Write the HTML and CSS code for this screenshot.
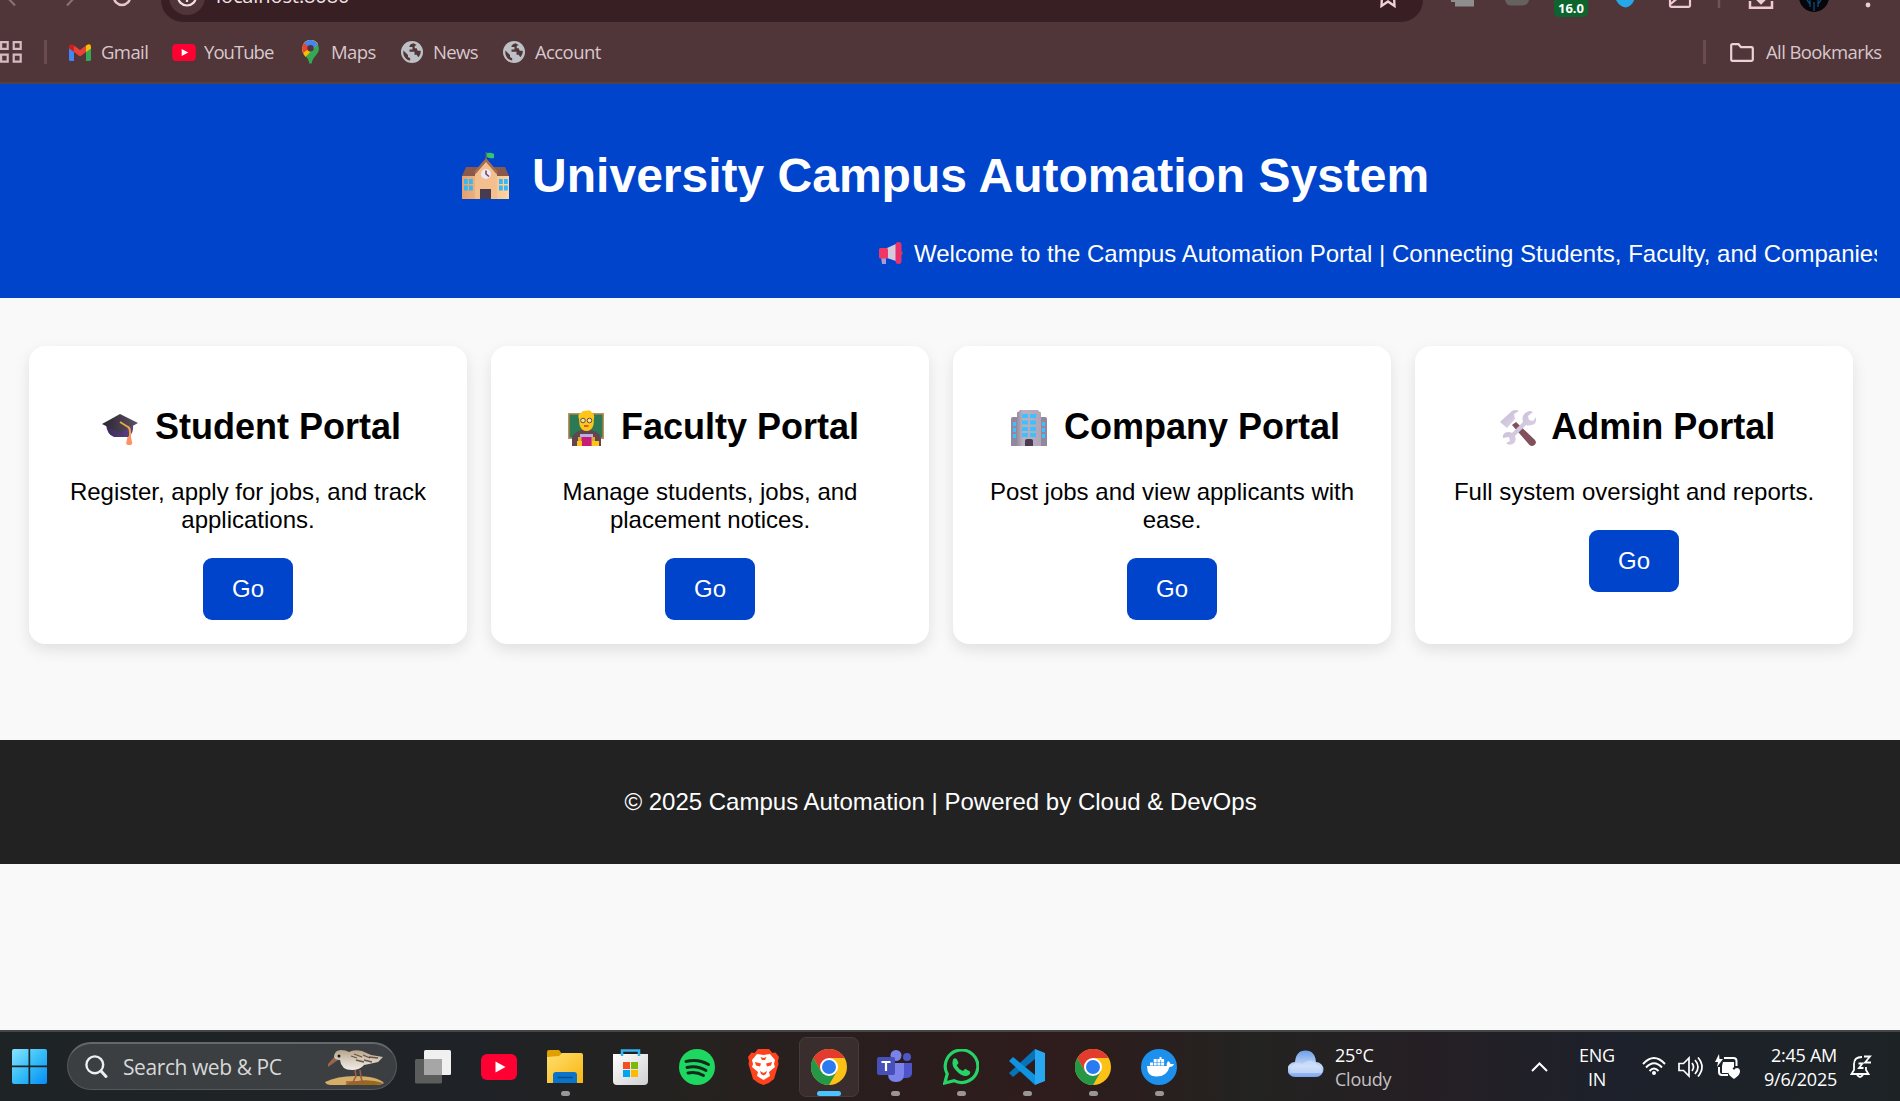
FILE: index.html
```
<!DOCTYPE html>
<html lang="en">
<head>
<meta charset="utf-8">
<title>University Campus Automation System</title>
<link rel="stylesheet" href="styles.css">
</head>
<body>
<svg class="defs" aria-hidden="true">
  <defs>
    <linearGradient id="wall" x1="0" x2="1"><stop offset="0" stop-color="#e5a070"/><stop offset="1" stop-color="#ffd6a3"/></linearGradient>
    <linearGradient id="win" x1="0" y1="0" x2="1" y2="1"><stop offset="0" stop-color="#8be3ff"/><stop offset=".5" stop-color="#35bdf7"/><stop offset="1" stop-color="#078df5"/></linearGradient>
    <linearGradient id="cap" x1="0" x2="1"><stop offset="0" stop-color="#2c2532"/><stop offset="1" stop-color="#5b5065"/></linearGradient>
    <linearGradient id="capbase" x1="0" x2="1"><stop offset="0" stop-color="#3a2a5a"/><stop offset="1" stop-color="#62408a"/></linearGradient>
    <linearGradient id="fold" x1="0" y1="0" x2="1" y2="1"><stop offset="0" stop-color="#ffdf70"/><stop offset="1" stop-color="#f9b50f"/></linearGradient>
    <linearGradient id="bag" x1="0" y1="0" x2="1" y2="1"><stop offset="0" stop-color="#fff"/><stop offset="1" stop-color="#cfd0d2"/></linearGradient>
    <linearGradient id="cloud" x1="0" y1="0" x2="0" y2="1"><stop offset="0" stop-color="#6f9fe8"/><stop offset=".6" stop-color="#c5d9f8"/><stop offset="1" stop-color="#7ea5ee"/></linearGradient>
    <linearGradient id="steel" x1="0" y1="0" x2="1" y2="1"><stop offset="0" stop-color="#c2b9cc"/><stop offset="1" stop-color="#e3d7f0"/></linearGradient>
    <linearGradient id="tower" x1="0" x2="1"><stop offset="0" stop-color="#978ea2"/><stop offset=".25" stop-color="#bab1c0"/><stop offset="1" stop-color="#b1a6b9"/></linearGradient>
    <linearGradient id="bird" x1="0" y1="0" x2="0" y2="1"><stop offset="0" stop-color="#b8a388"/><stop offset=".55" stop-color="#d9cfc2"/><stop offset="1" stop-color="#f1ece8"/></linearGradient>
    <symbol id="chrome" viewBox="0 0 36 36">
      <circle cx="18" cy="18" r="18" fill="#fbc116"/>
      <path d="M2.4 9A18 18 0 0 1 33.6 9H18L10.2 22.5Z" fill="#e33b2e"/>
      <path d="M2.4 9A18 18 0 0 0 18 36L25.8 22.5H10.2Z" fill="#249846"/>
      <circle cx="18" cy="18" r="9" fill="#fff"/><circle cx="18" cy="18" r="7" fill="#2b7bf0"/>
    </symbol>
    <symbol id="globe" viewBox="0 0 22 22">
      <circle cx="11" cy="11" r="11" fill="#bdc1c6"/>
      <path d="M12.500 2.200c-2 .3-4.500 2-4 3.800h3v2.500H8.500v2.300h5v3h2.200l1.500 2.500c2-2 2.800-4.500 2.500-6.500h-3l-1-2.500h-2V5l2-1ZM2.400 9.500 7 14v2l2.200 1.200v2.400C4.500 18.800 1.500 14.500 2.400 9.500Z" fill="#503539"/>
    </symbol>
    <symbol id="play" viewBox="0 0 36 26">
      <rect width="36" height="26" rx="6" fill="#ff0033"/><path d="M14.500 7.500v11l10-5.500Z" fill="#fff"/>
    </symbol>
  </defs>
</svg>

<div class="browser">
  <div class="toolbar">
    <svg class="nav" width="161" height="22" viewBox="0 0 161 22" fill="none" stroke-width="2.200">
      <path d="M7-3 15 5.500M75-3 67 5.500" stroke="#8a6f73"/><path d="M114-3A8 8 0 0 0 130-3" stroke="#e8c4cb" stroke-width="2.600"/>
    </svg>
    <div class="omnibox">
      <svg class="site" width="36" height="22" viewBox="0 0 36 22"><circle cx="18" cy="-3" r="18" fill="#503539"/><circle cx="18" cy="-3.500" r="9" fill="none" stroke="#f1dfe2" stroke-width="2.200"/><path d="M18-5v7" stroke="#f1dfe2" stroke-width="2.200"/></svg>
      <span class="url">localhost:8080</span>
      <svg class="star" width="20" height="22" viewBox="0 0 20 22"><path d="M4-4 3.500 6 10 1.500 16.500 6 16-4" fill="none" stroke="#f0d3d9" stroke-width="2.300"/></svg>
    </div>
    <svg class="ext" width="120" height="22" viewBox="0 0 120 22"><path d="M28 0h23v6.500H32V2h-4Z" fill="#8e8e8e"/><path d="M82 0h24q-1 5-6 5.500H88q-5 0-6-5.500Z" fill="#65615f"/></svg>
    <span class="badge">16.0</span>
    <svg class="ext" width="312" height="22" viewBox="0 0 312 22" fill="none">
      <path d="M27-2q4 9 10.500 9.500Q44 7 47-2Z" fill="#25a7e8"/>
      <path d="M82-3V5.500q0 1.300 1.300 1.300h17.400q1.300 0 1.300-1.300V-3M82.500 4l6-5" stroke="#f0cad2" stroke-width="2.200"/>
      <path d="M131 0v8" stroke="#735357" stroke-width="2.500"/>
      <path d="M162 1v6.800h22V1M173-4v6M169-1l4 4 4-4" stroke="#f0cad2" stroke-width="2.500"/>
      <circle cx="226" cy="-3" r="15" fill="#050609"/><path d="M222-1v8m8-8v8m-4-5v9M219 0l3 4m11-4-3 4" stroke="#124a78" stroke-width="1.300"/>
      <circle cx="280" cy="5" r="2.400" fill="#f0cad2"/>
    </svg>
  </div>
  <div class="bookmarks">
    <svg class="apps" width="22" height="22" viewBox="0 0 22 22" fill="none" stroke="#d4bcc0" stroke-width="2.200"><path d="M1.100 1.100h6.600v6.800H1.100ZM13.700 1.100h7v6.800h-7ZM1.100 13.700h6.600v7H1.100ZM13.700 13.700h7v7h-7Z"/></svg>
    <i class="rule"></i>
    <a class="bm gmail"><svg width="22" height="17" viewBox="0 0 22 17"><path d="M0 3h5v14H1.500Q0 17 0 15.500Z" fill="#4285f4"/><path d="M17 3h5v12.500q0 1.500-1.500 1.500H17Z" fill="#34a853"/><path d="M17 8V1.500Q22-1.500 22 3v1.500Z" fill="#fbbc04"/><path d="M0 4.500V3Q0-1.500 5 1.500V8Z" fill="#c5221f"/><path d="M5 1.500 11 6l6-4.500V8l-6 4.500L5 8Z" fill="#ea4335"/></svg><span>Gmail</span></a>
    <a class="bm youtube"><svg width="24" height="17"><use href="#play"/></svg><span>YouTube</span></a>
    <a class="bm maps"><svg width="17" height="24" viewBox="0 0 17 24"><path d="M8.500 0A8.500 8.500 0 0 1 17 8.500c0 6-6.500 8-7.300 15h-2.400C6.500 16.500 0 14.500 0 8.500A8.500 8.500 0 0 1 8.500 0Z" fill="#34a853"/><path d="M2 3A8.500 8.500 0 0 1 16 4L3.500 17Q0 12.500 0 8.500Z" fill="#fbbc04"/><path d="M2 3A8.500 8.500 0 0 1 15.800 4.200L8 12Z" fill="#4285f4"/><path d="M2 3 8 8 1 13Q-1 7 2 3Z" fill="#ea4335"/><circle cx="8.500" cy="8.300" r="3.200" fill="#503539"/></svg><span>Maps</span></a>
    <a class="bm news"><svg width="22" height="22"><use href="#globe"/></svg><span>News</span></a>
    <a class="bm account"><svg width="22" height="22"><use href="#globe"/></svg><span>Account</span></a>
    <i class="rule end"></i>
    <a class="bm all"><svg width="24" height="19" viewBox="0 0 24 19"><path d="M2.500 1.200h6l2.500 3h10.500q1.300 0 1.300 1.300v11q0 1.300-1.300 1.300h-19q-1.300 0-1.300-1.300v-14q0-1.300 1.300-1.300Z" fill="none" stroke="#ead3d7" stroke-width="2.200"/></svg><span>All Bookmarks</span></a>
  </div>
</div>

<header class="hero">
  <h1><svg class="emoji" width="47" height="48" viewBox="0 0 47 48">
    <path d="M23.500 0H25v9h-1.500Z" fill="#5d6470"/><path d="M25 1q4-1 7 1v4q-4 1-7-1Z" fill="#32c76b"/>
    <path d="M0 24h47v23H0Z" fill="url(#wall)"/><path d="M4 15h39l4 9H0Z" fill="#8a594a"/>
    <path d="M13 22 24 9l11 13v25H13Z" fill="#f4bf8f"/><path d="M12 20 24 6l12 14-1.500 2L24 10 13.500 22Z" fill="#a26b54"/>
    <circle cx="24" cy="22" r="5" fill="#eee8f3"/><path d="M24 18.500V22l3 2.500" fill="none" stroke="#664057" stroke-width="1.500"/>
    <path d="M18 47V37h11v10Z" fill="#463b4f"/>
    <path d="M2 27h3.800v5H2Zm5 0h3.800v5H7ZM2 33.500h3.800v5H2Zm5 0h3.800v5H7ZM37 27h3.800v5H37Zm5 0h3.800v5H42ZM37 33.500h3.800v5H37Zm5 0h3.800v5H42Z" fill="#35b9f5"/>
  </svg> University Campus Automation System</h1>
  <div class="marquee"><svg width="24" height="23" viewBox="0 0 24 23"><path d="M2 15h5v7H3Z" fill="#a99bd0"/><path d="M8 6 17 2v17l-9-3Z" fill="#d6cbdc"/><rect y="6" width="9" height="10.500" rx="1.500" fill="#f03665"/><path d="M22 9q2 0 2 2t-2 2Z" fill="#74556b"/><rect x="16.500" width="6" height="22" rx="3" fill="#ec316a"/></svg><span>Welcome to the Campus Automation Portal | Connecting Students, Faculty, and Companies</span></div>
</header>

<main class="portals">
  <section class="card">
    <h2><svg class="emoji" width="36" height="36" viewBox="0 0 36 36"><path d="M4 14h27q1 10-5 13H12Q5 25 4 14Z" fill="url(#capbase)"/><path d="M0 14 18 4l18 9-18 10Z" fill="url(#cap)"/><path d="M18 12 26 17q2 1 2 5v6" fill="none" stroke="#eda53d" stroke-width="2"/><path d="M25.500 27h3.500l1.200 6q0 2-3 2t-3-2Z" fill="#ff8f66"/></svg> Student Portal</h2>
    <p>Register, apply for jobs, and track applications.</p>
    <a class="go">Go</a>
  </section>
  <section class="card">
    <h2><svg class="emoji" width="36" height="36" viewBox="0 0 36 36"><rect y="3" width="36" height="26" fill="#c29157"/><rect x="1.500" y="4.500" width="33" height="23" fill="#2c7955"/><path d="M4 36V28q1-5 9-8h9q10 2 11 8v8Z" fill="#634550"/><path d="M11 9Q9 4 13 3q2-3 5-2 5-2 6 2 3 1 2 5l-.5 7q-2 6-7 6t-7-6Z" fill="#ffc61a"/><circle cx="15" cy="10.500" r="2.300" fill="#ffe27b" stroke="#5b4a68"/><circle cx="21.500" cy="10.500" r="2.300" fill="#ffe27b" stroke="#5b4a68"/><path d="M16 16h4.500" stroke="#be412e" stroke-width="1.500"/><path d="M12 24h13v4H12Z" fill="#b7b1e2"/><path d="M10 27h17v9H10Z" fill="#dcae2e"/><path d="M13.500 27h10v9h-10Z" fill="#c91c79"/><path d="M9 31h5v5H9Zm15 0h7v5h-7Z" fill="#ffc61a"/></svg> Faculty Portal</h2>
    <p>Manage students, jobs, and placement notices.</p>
    <a class="go">Go</a>
  </section>
  <section class="card">
    <h2><svg class="emoji" width="36" height="36" viewBox="0 0 36 36"><path d="M0 9q0-2 2-2h32q2 0 2 2v27H0Z" fill="#92889d"/><path d="M6 3q0-1.500 2-1.500L9 0h18l1 1.500q2 0 2 1.500v33H6Z" fill="url(#tower)"/><path d="M11 4h6v4h-6Zm8 0h6v4h-6ZM11 10.500h6v4h-6Zm8 0h6v4h-6ZM11 17h6v4h-6Zm8 0h6v4h-6ZM11 23h6v4h-6Zm8 0h6v4h-6ZM2 12h3v4H2Zm0 6h3v4H2Zm0 6h3v4H2ZM31 12h3v4h-3Zm0 6h3v4h-3Zm0 6h3v4h-3Z" fill="#3bc1ff"/><path d="M14 36v-5q0-2 2-2h4q2 0 2 2v5Z" fill="#4a3b50"/></svg> Company Portal</h2>
    <p>Post jobs and view applicants with ease.</p>
    <a class="go">Go</a>
  </section>
  <section class="card">
    <h2><svg class="emoji" width="36" height="36" viewBox="0 0 36 36"><path d="M12 15l4-3 19 18q2 3-.500 5t-5 0Z" fill="#82505a"/><path d="M0 12 12 1q4-2 7 0l-5 3 1 5-8 9Z" fill="url(#steel)"/><path d="M3 28q-1-5 5-6 3 0 4 1L23 12q-2-7 4-10 3-2 6 0l-5 4 1 4 4 1 3-4q1 8-5 8-3 1-5 0L15 26q2 6-2 8-4 2-7-1l4-2-1-4Z" fill="url(#steel)"/></svg> Admin Portal</h2>
    <p>Full system oversight and reports.</p>
    <a class="go">Go</a>
  </section>
</main>

<footer class="footer">© 2025 Campus Automation | Powered by Cloud &amp; DevOps</footer>

<div class="taskbar">
  <svg class="start" width="35" height="35" viewBox="0 0 35 35"><path d="M2 0h14.500v16.500H0V2Q0 0 2 0ZM18.200 0H33q2 0 2 2v14.500H18.200ZM0 18.200h16.500V35H2q-2 0-2-2ZM18.200 18.200H35V33q0 2-2 2H18.200Z" fill="url(#win)"/></svg>
  <div class="search">
    <svg width="23" height="24" viewBox="0 0 23 24" fill="none" stroke="#eceef0"><circle cx="9.800" cy="9.800" r="8.400" stroke-width="2.400"/><path d="m16 16 5 5.500" stroke-width="3" stroke-linecap="round"/></svg>
    <span>Search web &amp; PC</span>
    <svg class="sandpiper" width="60" height="36" viewBox="0 0 60 36">
      <path d="M0 33q12-6 30-6 22 0 29 7-3 2-10 2H6Q1 36 0 33Z" fill="#d7ad6a"/><path d="M20 35q20-7 38-1-3 2-10 2H22Z" fill="#97681d"/>
      <path d="M10 7 3 15v3l10-7Z" fill="#9a634e"/><path d="M9 7q1-6 7-6 5 0 8 2 5-3 13-1l9 4 12 2-5 5-9 2-5 1q-4 5-12 5-11 0-12-10-6 0-6-4Z" fill="url(#bird)"/>
      <path d="m26 7 6 2m-3-4 8 3m-6 3 8 2m-1-7 7 3m-6 2 8 2m-3-5 9 1" stroke="#665444" stroke-width="1.300"/><circle cx="14" cy="7" r="1.500" fill="#191919"/><path d="m30 21 1 6-3 6m-7 0h11m3-12 1 7 1 4m-6 1h9" fill="none" stroke="#9d5e42" stroke-width="1.600"/>
    </svg>
  </div>
  <div class="pins">
    <span class="pin"><svg width="36" height="34" viewBox="0 0 36 34"><rect x="9" width="27" height="25" rx="1.500" fill="#f0f0f0"/><rect y="9" width="27" height="24.500" rx="1.500" fill="#666" fill-opacity=".85"/><path d="M9 9h18v16H9Z" fill="#a6a6a6"/></svg></span>
    <span class="pin"><svg width="36" height="26"><use href="#play"/></svg></span>
    <span class="pin open"><svg width="36" height="33" viewBox="0 0 36 33"><path d="M0 2q0-2 2-2h10l3 4v4H0Z" fill="#dfa000"/><path d="M0 7 12 6l3-3h19q2 0 2 2v28H0Z" fill="url(#fold)"/><path d="M6 33V25q0-3 3-3h18q3 0 3 3v8Z" fill="#0b73c9"/><path d="M10.500 27.500h15" stroke="#064c88" stroke-width="1.500"/></svg></span>
    <span class="pin store"><svg width="35" height="36" viewBox="0 0 35 36"><path d="M9 7V1.500h17V7" fill="none" stroke="#35b4ef" stroke-width="2.500"/><path d="M0 5h35v27q0 4-4 4H4q-4 0-4-4Z" fill="url(#bag)"/><path d="M9 7V4.500M26 7V4.500" stroke="#35b4ef" stroke-width="2.500"/><path d="M10 13h7v7h-7Z" fill="#f25022"/><path d="M18 13h7v7h-7Z" fill="#7fba00"/><path d="M10 21h7v7h-7Z" fill="#00a4ef"/><path d="M18 21h7v7h-7Z" fill="#ffb900"/></svg></span>
    <span class="pin"><svg width="36" height="36" viewBox="0 0 36 36"><circle cx="18" cy="18" r="18" fill="#1ed760"/><path d="M7 12.500q12-3 22.500 3M8 18.500q10-2.500 19 3M9 24q8-2 15.500 2.500" fill="none" stroke="#12291b" stroke-width="3" stroke-linecap="round"/></svg></span>
    <span class="pin"><svg width="31" height="36" viewBox="0 0 31 36"><path d="M10 0h11l3.500 4 3-.500L31 8l-1 4 .500 3-4.500 15q-4 4-10.500 6Q9 34 5 30L.500 15 1 12 0 8l3.500-4.500 3 .500Z" fill="#ff431c"/><path d="m9 5 6.500 1L22 5l5 6-1 4 1 3-6 5 1 4-6.500 4L9 27l1-4-6-5 1-3-1-4Z" fill="#fff"/><path d="m7 13 6 1.500-1 3-4-1ZM24 13l-6 1.500 1 3 4-1ZM12 22l3.500 2 3.500-2-1 3-2.500 1.500L13 25ZM12.500 8l3 1 3-1-1.500 3h-3Z" fill="#ff431c"/></svg></span>
    <span class="pin active"><svg width="36" height="36"><use href="#chrome"/></svg></span>
    <span class="pin open"><svg width="36" height="33" viewBox="0 0 36 33"><circle cx="30" cy="7" r="4" fill="#4f56c7"/><path d="M26 13h9v10q0 5-6 5h-3Z" fill="#4e55cb"/><circle cx="19" cy="5.500" r="5.500" fill="#7b83eb"/><path d="M11 13h16v11q0 8-8 8t-8-8Z" fill="#7b83eb"/><rect y="7" width="18" height="18" rx="2" fill="#4650b8"/><path d="M4.500 12h9M9 12v9" stroke="#fff" stroke-width="2.200"/></svg></span>
    <span class="pin open"><svg width="36" height="36" viewBox="0 0 36 36"><path d="m1.800 34 2.400-9A16.300 16.300 0 1 1 11 31.700Z" fill="none" stroke="#25d366" stroke-width="3.200"/><path d="M10 10.500q2-2.500 4 0l1.500 3.500-1.800 2.500q2 4 6.300 5.500l2.200-2.200 4.800 2.700q1 3-3.500 4.500-5 .5-10-5Q8 17 10 10.500Z" fill="#25d366"/></svg></span>
    <span class="pin open"><svg width="36" height="36" viewBox="0 0 36 36"><path d="M0 24 26 0v10L4 28Z" fill="#0873b7"/><path d="m0 12 4-4 22 18v10Z" fill="#1093e0"/><path d="m26 0 10 4v28l-10 4Z" fill="#29a8f2"/></svg></span>
    <span class="pin open"><svg width="36" height="36"><use href="#chrome"/></svg></span>
    <span class="pin open"><svg width="36" height="36" viewBox="0 0 36 36"><circle cx="18" cy="18" r="18" fill="#1d90ed"/><path d="M6 17h20l-.5-2 1.500-3q2 1 2.500 3h3.500q-1 3-4.500 3-2.500 9.500-13 9.500Q6 28 6 17ZM9 13.500h3v3H9Zm3.700 0h3v3h-3Zm3.700 0h3v3h-3Zm3.700 0h3v3h-3ZM12.700 10h3v3h-3Zm3.700 0h3v3h-3Zm3.700 0h3v3h-3ZM18.500 8h2v3h-2Z" fill="#fff"/></svg></span>
  </div>
  <div class="weather">
    <svg width="36" height="28" viewBox="0 0 36 28"><path d="M7 27a7.500 7.500 0 0 1 0-15Q8 .5 17.500.5T28 12a7.500 7.500 0 0 1 0 15Z" fill="url(#cloud)"/><path d="M2 19Q6 10 14 14q9-8 17 2 4 3 3 7H2Z" fill="#d4e2fa" opacity=".6"/></svg>
    <div class="lines"><span class="temp">25°C</span><span class="sky">Cloudy</span></div>
  </div>
  <svg class="chevron" width="17" height="10" viewBox="0 0 17 10"><path d="m1 9 7.500-7.500L16 9" fill="none" stroke="#fff" stroke-width="2"/></svg>
  <div class="lines lang"><span>ENG</span><span>IN</span></div>
  <div class="status">
    <svg width="24" height="19" viewBox="0 0 24 19" fill="none" stroke="#fff" stroke-width="1.900"><path d="M1 7q11-12 22 0M4 10.500q8-8.500 16 0M7.500 14q4.500-5 9 0"/><circle cx="12" cy="16" r="2" fill="#fff" stroke="none"/></svg>
    <svg width="25" height="22" viewBox="0 0 25 22" fill="none" stroke="#fff" stroke-width="1.700"><path d="M1 7.500h4.500L11 2v18l-5.500-5.500H1ZM14 7q3 4 0 8M17 4q6 7 0 14M20 1.500q8 9.500 0 19"/></svg>
    <svg width="25" height="25" viewBox="0 0 25 25"><path d="M9 4h9.500q3 0 3 3v5M4 13v5q0 3 3 3h6" fill="none" stroke="#fff" stroke-width="2"/><path d="M8 8h11v5l-6 6H7v-7Z" fill="#fff"/><path d="M4 0 0 8h3l-1 5 6-8H4.500Z" fill="#fff"/><path d="M19 25q-6-4-6-7.500 0-3.500 3-3.500 2 0 3 2 1-2 3-2 3 0 3 3.500 0 3.500-6 7.500Z" fill="#fff"/></svg>
  </div>
  <div class="lines clock"><span>2:45 AM</span><span>9/6/2025</span></div>
  <svg class="bell" width="22" height="24" viewBox="0 0 22 24" fill="none" stroke="#fff" stroke-width="1.800"><path d="M12 2Q4 2 4 9v6l-2.500 4h17L16 15v-3M7 19.500q3 5 6 0M14 1.500h6l-5 6h6M8.500 8.500h4L9 13h4.500"/></svg>
</div>
</body>
</html>
```
FILE: styles.css
```
* { box-sizing: border-box; }

body {
  margin: 0;
  width: 1900px;
  height: 1101px;
  overflow: hidden;
  display: flex;
  flex-direction: column;
  background: #f9f9f9;
  color: #000;
  font: 24px/28px "Liberation Sans", Arial, sans-serif;
}

svg { display: block; flex: none; }
.defs { position: absolute; width: 0; height: 0; }

/* Browser frame */
.browser {
  flex: none;
  height: 84px;
  background: #503539;
  border-bottom: 2px solid #524043;
  color: #d8c8cb;
  font: 18.5px/26px "Open Sans", "Noto Sans", sans-serif;
}
.toolbar { display: flex; height: 22px; overflow: hidden; }
.omnibox {
  display: flex;
  width: 1263px;
  padding: 0 25px 0 8px;
  background: #371f24;
  border-radius: 0 0 26px 26px;
  overflow: hidden;
}
.url { margin: -17px auto 0 11px; color: #f3e3e6; font-size: 20px; letter-spacing: -0.1px; }
.badge {
  width: 34px;
  height: 17px;
  margin-left: 11px;
  padding-top: 1px;
  background: #0d652d;
  border-radius: 0 0 5px 5px;
  color: #fff;
  font: 700 13px/15px "Open Sans", sans-serif;
  text-align: center;
}
.bookmarks { display: flex; align-items: center; height: 60px; }
.rule { width: 3px; height: 24px; margin-left: 22px; background: #694b50; }
.rule.end { margin-left: auto; }
.bm { display: flex; align-items: center; white-space: nowrap; }
.bm span { letter-spacing: -0.6px; }
.gmail { width: 103px; margin-left: 22px; gap: 10px; }
.youtube { width: 130px; gap: 8px; }
.youtube span { letter-spacing: -0.95px; }
.maps { width: 99px; gap: 12px; }
.news { width: 102px; gap: 10px; }
.account { gap: 10px; }
.all { width: 170px; margin-left: 24px; gap: 12px; }

/* Page header */
.hero { flex: none; height: 214px; padding-top: 64px; background: #0044cc; color: #fff; }
h1 { width: 1881px; margin: 0 0 37px; font-size: 48px; line-height: 55px; text-align: center; }
.emoji { display: inline-block; }
h1 .emoji { margin: -10px 10px -5px 10px; vertical-align: -7px; position: relative; top: -4px; }
.marquee { display: flex; gap: 11px; width: 1877px; padding-left: 879px; overflow: hidden; white-space: nowrap; }
.marquee svg { margin-top: 2px; }

/* Portal cards */
.portals {
  flex: none;
  display: grid;
  grid-template-columns: repeat(4, 438px);
  grid-template-rows: 298px;
  gap: 24px;
  height: 442px;
  padding: 48px 0 0 29px;
}
.card {
  padding: 60px 36px 24px;
  background: #fff;
  border-radius: 16px;
  box-shadow: 0 6px 15px rgba(0, 0, 0, 0.1);
  text-align: center;
}
h2 { margin: 0 0 31px; font-size: 36px; line-height: 41px; white-space: nowrap; }
h2 .emoji { margin: -4px 7px -4px 7px; vertical-align: -5px; position: relative; top: -2px; }
p { margin: 0 0 24px; }
.go { display: inline-block; width: 90px; height: 62px; padding: 17px 0; border-radius: 9px; background: #0044cc; color: #fff; }

.footer { flex: none; height: 124px; padding: 48px 19px 48px 0; background: #222; color: #fff; text-align: center; }

/* Taskbar */
.taskbar {
  display: flex;
  align-items: center;
  height: 71px;
  margin-top: auto;
  border-top: 2px solid #444747;
  background: linear-gradient(90deg, #1e2426 0, #1f2226 480px, #25221f 700px, #2b1d1d 900px, #2f1c1c 1060px, #232321 1250px, #251f24 1420px, #1d212b 1620px, #1d2325 1900px);
  color: #fff;
  font: 18px/24px "Open Sans", "Noto Sans", sans-serif;
}
.start { margin-left: 12px; }
.search {
  display: flex;
  align-items: center;
  width: 330px;
  height: 48px;
  margin: 0 0 1px 20px;
  padding: 0 11px 0 17px;
  border: 1px solid #56595b;
  border-top: 2px solid #65686a;
  border-radius: 24px;
  background: #3b3f41;
  color: #d6d8d9;
  font-size: 21px;
}
.search span { margin-left: 15px; letter-spacing: -0.42px; }
.sandpiper { margin-left: auto; }
.pins { display: flex; gap: 6px; margin-left: 6px; }
.pin { position: relative; display: flex; align-items: center; justify-content: center; width: 60px; height: 60px; }
.pin.store { padding-right: 2px; }
.pin.open::after, .pin.active::after { content: ""; position: absolute; bottom: 1px; left: 25.500px; width: 9px; height: 5px; border-radius: 3px; background: #9b9696; }
.pin.active { border: 1px solid #463b3b; border-radius: 7px; background: #392d2d; }
.pin.active::after { left: 17px; bottom: 0; width: 24px; background: #4cc2ff; }
.weather { display: flex; align-items: center; gap: 11px; width: 243px; margin-left: 99px; }
.weather svg { margin-bottom: 6px; }
.lines { display: flex; flex-direction: column; letter-spacing: -0.25px; }
.sky { color: #c4c2c3; }
.lang { width: 60px; margin-left: 19px; align-items: center; }
.status { display: flex; align-items: center; gap: 12px; margin-left: 15px; }
.clock { width: 97px; align-items: flex-end; }
.bell { margin-left: 13px; }
```
